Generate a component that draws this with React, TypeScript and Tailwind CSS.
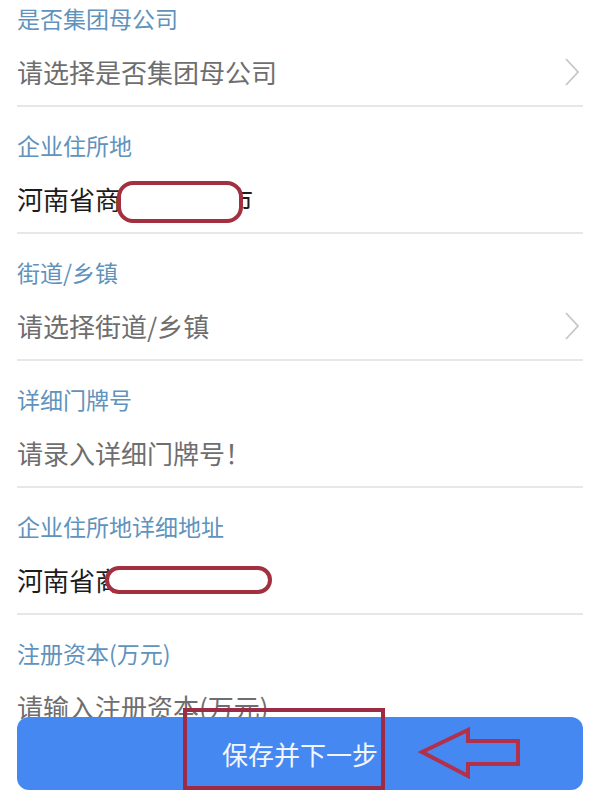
const font = { fontFamily: '"Noto Sans CJK SC", "Noto Sans", sans-serif' };

interface FieldProps {
  label: string;
  children: React.ReactNode;
  chevron?: boolean;
  divider?: boolean;
}

function Chevron() {
  return (
    <svg width="16" height="28" viewBox="0 0 16 28" className="mr-[3px]">
      <polyline points="2,1 14,14 2,27" fill="none" stroke="#c6c6c6" strokeWidth="1.8" />
    </svg>
  );
}

function Field({ label, children, chevron, divider = true }: FieldProps) {
  return (
    <div className="flex flex-col">
      <div className="pt-[24px] text-[23px] leading-[28px] text-[#5f93bd]">{label}</div>
      <div className="mt-[24px] flex h-[32px] items-center justify-between">
        <div className="relative flex items-center text-[26px] leading-[32px]">{children}</div>
        {chevron && <Chevron />}
      </div>
      <div className="pb-[17px]" />
      {divider && <div className="h-[2px] bg-[#e7e7e7]" />}
    </div>
  );
}

export default function App() {
  return (
    <div className="relative h-[800px] w-[600px] overflow-hidden bg-white" style={font}>
      <div className="-mt-[20px] px-[17px]">
        <Field label="是否集团母公司" chevron>
          <span className="text-[#6e6e6e]">请选择是否集团母公司</span>
        </Field>
        <Field label="企业住所地">
          <span className="text-[#1c1c1c]">河南省商</span>
          <span className="inline-block w-[106px]" />
          <span className="text-[#1c1c1c]">市</span>
          <span className="absolute left-[100px] top-[-2px] h-[42px] w-[126px] rounded-[16px] border-[4px] border-[#a3303f] bg-white" />
        </Field>
        <Field label="街道/乡镇" chevron>
          <span className="text-[#6e6e6e]">请选择街道/乡镇</span>
        </Field>
        <Field label="详细门牌号">
          <span className="text-[#6e6e6e]">请录入详细门牌号！</span>
        </Field>
        <Field label="企业住所地详细地址">
          <span className="text-[#1c1c1c]">河南省商</span>
          <span className="absolute left-[88px] top-[2px] h-[28px] w-[167px] rounded-[14px] border-[4px] border-[#a3303f] bg-white" />
        </Field>
        <Field label="注册资本(万元)" divider={false}>
          <span className="text-[#6e6e6e]">请输入注册资本(万元)</span>
        </Field>
      </div>

      <div className="absolute bottom-[10px] left-[17px] right-[17px] flex h-[73px] items-center justify-center rounded-[12px] bg-[#4688f1]">
        <span className="text-[26px] text-[#f2f6ff]">保存并下一步</span>
      </div>

      <div className="absolute left-[183px] top-[708px] h-[82px] w-[202px] border-[4px] border-[#9d2b45]" />

      <svg className="absolute left-[418px] top-[726px]" width="106" height="54" viewBox="0 0 106 54">
        <polygon
          points="4,26 50,4 50,15 100,15 100,38 50,38 50,50"
          fill="none"
          stroke="#b3304a"
          strokeWidth="4"
          strokeLinejoin="miter"
        />
      </svg>
    </div>
  );
}
